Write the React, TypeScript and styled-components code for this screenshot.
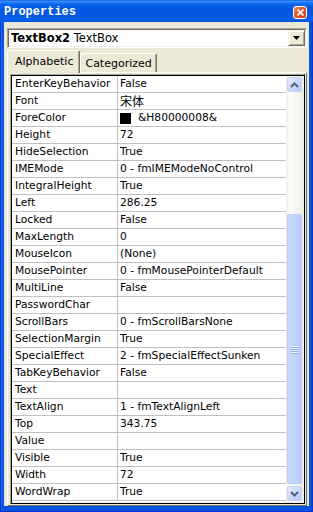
import React from 'react';
import styled, { createGlobalStyle } from 'styled-components';

const GlobalStyle = createGlobalStyle`
  html, body {
    margin: 0;
    padding: 0;
    background: #0855dd;
  }
  body {
    font-family: "DejaVu Sans", "Noto Sans CJK SC", sans-serif;
    font-size: 10.7px;
    color: #000;
  }
`;

const Window = styled.div`
  width: 313px;
  height: 512px;
  box-sizing: border-box;
  display: flex;
  flex-direction: column;
  background: #0855dd;
  box-shadow: inset 1px 0 #0831d9, inset -1px 0 #0831d9, inset 0 -1px #0831d9, inset 2px 0 #166aee, inset -2px 0 #0a4dc8;
`;

const TitleBar = styled.div`
  height: 22px;
  flex-shrink: 0;
  display: flex;
  align-items: center;
  justify-content: space-between;
  padding: 0 6px 0 4px;
  background: linear-gradient(
    to bottom,
    #0a5fe8 0%,
    #3d8ff7 6%,
    #1b78f5 12%,
    #0664ec 22%,
    #0458e0 40%,
    #0558e4 70%,
    #0661ef 86%,
    #0456dc 100%
  );
`;

const Title = styled.span`
  font-family: "Liberation Mono", monospace;
  font-weight: bold;
  font-size: 12px;
  color: #fff;
  margin-top: 2px;
`;

const CloseButton = styled.div`
  width: 14px;
  height: 13px;
  box-sizing: border-box;
  margin-top: 3px;
  border: 1px solid #fff;
  border-radius: 3px;
  background: linear-gradient(135deg, #ee8a6a 0%, #e25a30 40%, #c83c16 100%);
  display: flex;
  align-items: center;
  justify-content: center;
`;

const Client = styled.div`
  flex: 1;
  min-height: 0;
  margin: 0 4px 6px 4px;
  padding: 6px 2px 0 3px;
  background: #ece9d8;
  display: flex;
  flex-direction: column;
`;

const Combo = styled.div`
  height: 20px;
  box-sizing: border-box;
  flex-shrink: 0;
  display: flex;
  align-items: stretch;
  background: #fff;
  border-top: 1px solid #aca899;
  border-left: 1px solid #aca899;
  border-right: 1px solid #fff;
  border-bottom: 1px solid #fff;
  box-shadow: inset 1px 1px #716f64, inset -1px -1px #f1efe2;
  padding: 1px;
`;

const ComboText = styled.div`
  flex: 1;
  display: flex;
  align-items: center;
  padding-left: 2px;
  font-size: 11.5px;
  white-space: pre;
`;

const ComboName = styled.b`
  font-weight: bold;
`;

const DropButton = styled.div`
  width: 17px;
  box-sizing: border-box;
  background: #ece9d8;
  border-top: 1px solid #f1efe2;
  border-left: 1px solid #f1efe2;
  border-right: 1px solid #716f64;
  border-bottom: 1px solid #716f64;
  box-shadow: inset 1px 1px #fff, inset -1px -1px #aca899;
  display: flex;
  align-items: center;
  justify-content: center;
`;

const TabStrip = styled.div`
  height: 22px;
  margin-top: 2px;
  flex-shrink: 0;
  display: flex;
  align-items: flex-end;
  position: relative;
  z-index: 1;
`;

const Tab = styled.div<{ $active?: boolean }>`
  height: ${p => (p.$active ? '23px' : '19px')};
  margin-bottom: ${p => (p.$active ? '-1px' : '0')};
  box-sizing: border-box;
  padding: ${p => (p.$active ? '0 6px 2px 7px' : '0 4px 0 4px')};
  display: flex;
  align-items: center;
  background: #ece9d8;
  border-top: 1px solid #fff;
  border-left: 1px solid #fff;
  border-right: 1px solid #716f64;
  box-shadow: inset -1px 0 #aca899;
  border-radius: 2px 2px 0 0;
  font-size: 11px;
`;

const Panel = styled.div`
  flex: 1;
  min-height: 0;
  box-sizing: border-box;
  border-top: 1px solid #fff;
  border-left: 1px solid #fff;
  border-right: 1px solid #716f64;
  border-bottom: 1px solid #716f64;
  padding: 1px 1px 1px 2px;
  display: flex;
`;

const Grid = styled.div`
  flex: 1;
  min-width: 0;
  display: flex;
  border-top: 1px solid #aca899;
  border-left: 1px solid #aca899;
  border-right: 1px solid #000;
  border-bottom: 1px solid #000;
  box-shadow: inset 1px 1px #000, inset -1px -1px #f1efe2;
  padding: 1px;
  overflow: hidden;
`;

const Rows = styled.div`
  flex: 1;
  min-width: 0;
  background: #fff;
  overflow: hidden;
`;

const Row = styled.div`
  height: 17px;
  box-sizing: border-box;
  display: flex;
  border-bottom: 1px solid #c0c0c0;
  line-height: 16px;
  white-space: nowrap;
`;

const NameCell = styled.div`
  width: 106px;
  box-sizing: border-box;
  flex-shrink: 0;
  padding-left: 3px;
  border-right: 1px solid #c0c0c0;
  overflow: hidden;
`;

const ValueCell = styled.div`
  flex: 1;
  min-width: 0;
  padding-left: 2px;
  display: flex;
  align-items: center;
  overflow: hidden;
`;

const CjkText = styled.span`
  font-family: "Noto Sans CJK SC", sans-serif;
  font-size: 12px;
`;

const Swatch = styled.span<{ $color: string }>`
  width: 11px;
  height: 11px;
  background: ${p => p.$color};
  margin-right: 7px;
  flex-shrink: 0;
`;

const ScrollBar = styled.div`
  width: 17px;
  flex-shrink: 0;
  display: flex;
  flex-direction: column;
  background: linear-gradient(to right, #eeede5 0%, #fefefb 25%, #f4f3ee 70%, #eeede5 100%);
`;

const ScrollButton = styled.div`
  height: 17px;
  flex-shrink: 0;
  box-sizing: border-box;
  padding: 1px;
  display: flex;
`;

const ScrollButtonFace = styled.div`
  flex: 1;
  border: 1px solid #c3d3fd;
  border-radius: 2px;
  background: linear-gradient(135deg, #e6eefe 0%, #c6d6fb 60%, #b6cbf8 100%);
  display: flex;
  align-items: center;
  justify-content: center;
`;

const Track = styled.div`
  flex: 1;
  display: flex;
  flex-direction: column;
`;

const TrackSpace = styled.div`
  flex: 1;
`;

const Thumb = styled.div<{ $size: number }>`
  height: ${p => p.$size}px;
  margin: 0 1px 1px 1px;
  box-sizing: border-box;
  border: 1px solid #b7cbf7;
  border-radius: 2px;
  background: linear-gradient(to right, #cad9fd 0%, #c2d3fc 50%, #b8cbf8 100%);
  display: flex;
  align-items: center;
  justify-content: center;
`;

const Grip = styled.div`
  width: 7px;
  display: flex;
  flex-direction: column;
  gap: 1px;
`;

const GripLine = styled.div`
  height: 1px;
  background: #eef4fe;
  box-shadow: 0 1px #8cb0f8;
`;

type Prop = { name: string; value?: string; color?: string; cjk?: boolean };

const props: Prop[] = [
  { name: 'EnterKeyBehavior', value: 'False' },
  { name: 'Font', value: '宋体', cjk: true },
  { name: 'ForeColor', value: '&H80000008&', color: '#000' },
  { name: 'Height', value: '72' },
  { name: 'HideSelection', value: 'True' },
  { name: 'IMEMode', value: '0 - fmIMEModeNoControl' },
  { name: 'IntegralHeight', value: 'True' },
  { name: 'Left', value: '286.25' },
  { name: 'Locked', value: 'False' },
  { name: 'MaxLength', value: '0' },
  { name: 'MouseIcon', value: '(None)' },
  { name: 'MousePointer', value: '0 - fmMousePointerDefault' },
  { name: 'MultiLine', value: 'False' },
  { name: 'PasswordChar' },
  { name: 'ScrollBars', value: '0 - fmScrollBarsNone' },
  { name: 'SelectionMargin', value: 'True' },
  { name: 'SpecialEffect', value: '2 - fmSpecialEffectSunken' },
  { name: 'TabKeyBehavior', value: 'False' },
  { name: 'Text' },
  { name: 'TextAlign', value: '1 - fmTextAlignLeft' },
  { name: 'Top', value: '343.75' },
  { name: 'Value' },
  { name: 'Visible', value: 'True' },
  { name: 'Width', value: '72' },
  { name: 'WordWrap', value: 'True' },
];

const Chevron: React.FC<{ up?: boolean }> = ({ up }) => (
  <svg width="9" height="6" viewBox="0 0 9 6">
    <path
      d={up ? 'M1 5 L4.5 1.5 L8 5' : 'M1 1 L4.5 4.5 L8 1'}
      fill="none"
      stroke="#4d6185"
      strokeWidth="2"
    />
  </svg>
);

const App: React.FC = () => (
  <>
    <GlobalStyle />
    <Window>
      <TitleBar>
        <Title>Properties</Title>
        <CloseButton>
          <svg width="7" height="7" viewBox="0 0 7 7">
            <path d="M0.5 0.5 L6.5 6.5 M6.5 0.5 L0.5 6.5" stroke="#fff" strokeWidth="1.6" />
          </svg>
        </CloseButton>
      </TitleBar>
      <Client>
        <Combo>
          <ComboText>
            <ComboName>TextBox2</ComboName> TextBox
          </ComboText>
          <DropButton>
            <svg width="7" height="4" viewBox="0 0 7 4">
              <path d="M0 0 H7 L3.5 4 Z" fill="#000" />
            </svg>
          </DropButton>
        </Combo>
        <TabStrip>
          <Tab $active>Alphabetic</Tab>
          <Tab>Categorized</Tab>
        </TabStrip>
        <Panel>
          <Grid>
            <Rows>
              {props.map(p => (
                <Row key={p.name}>
                  <NameCell>{p.name}</NameCell>
                  <ValueCell>
                    {p.color && <Swatch $color={p.color} />}
                    {p.cjk ? <CjkText>{p.value}</CjkText> : p.value}
                  </ValueCell>
                </Row>
              ))}
            </Rows>
            <ScrollBar>
              <ScrollButton>
                <ScrollButtonFace>
                  <Chevron up />
                </ScrollButtonFace>
              </ScrollButton>
              <Track>
                <TrackSpace />
                <Thumb $size={270}>
                  <Grip>
                    <GripLine />
                    <GripLine />
                    <GripLine />
                    <GripLine />
                  </Grip>
                </Thumb>
              </Track>
              <ScrollButton>
                <ScrollButtonFace>
                  <Chevron />
                </ScrollButtonFace>
              </ScrollButton>
            </ScrollBar>
          </Grid>
        </Panel>
      </Client>
    </Window>
  </>
);

export default App;
